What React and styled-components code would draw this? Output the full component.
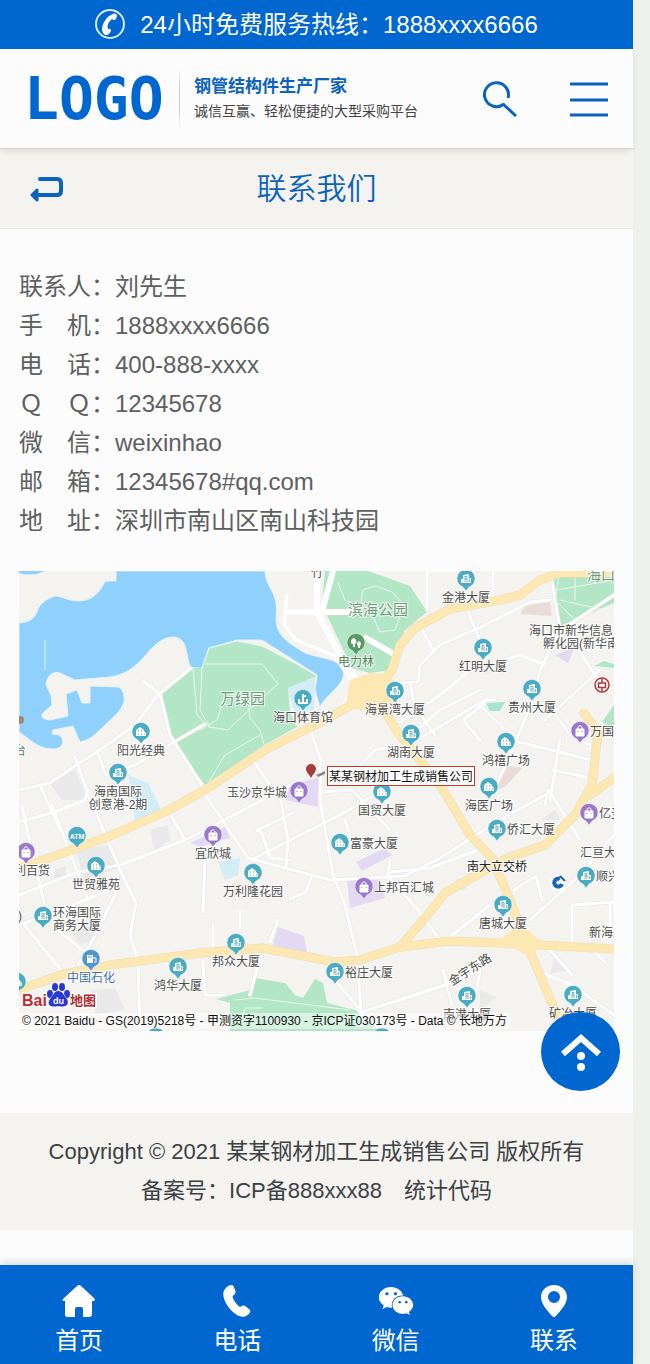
import React from "react";
import styled, { ThemeProvider, createGlobalStyle } from "styled-components";
import { FaWeixin } from "react-icons/fa";

const theme = {
  blue: "#0066d0",
  link: "#0b63bd",
  page: "#fcfcfc",
  panel: "#f4f3f0",
  gutter: "#eef0ec",
  text: "#5d6060",
  dark: "#3c4144",
};

const GlobalStyle = createGlobalStyle`
  * {
    box-sizing: border-box;
  }

  body {
    margin: 0;
    background: ${props => props.theme.gutter};
    color: ${props => props.theme.text};
    font-family: "Liberation Sans", "Noto Sans CJK SC", sans-serif;
  }

  a {
    color: inherit;
    text-decoration: none;
  }

  button {
    padding: 0;
    border: 0;
    background: none;
    cursor: pointer;
  }

  svg {
    display: block;
  }
`;

const Page = styled.div`
  display: flex;
  flex-direction: column;
  min-height: 100vh;
  margin-right: 17px;
  background: ${props => props.theme.page};
`;

const Hotline = styled.a`
  display: flex;
  align-items: center;
  justify-content: center;
  gap: 14px;
  height: 49px;
  background: ${props => props.theme.blue};
  && {
    color: #fff;
  }
  font-size: 24px;
  line-height: 48px;
`;

const Header = styled.header`
  position: relative;
  display: flex;
  align-items: center;
  height: 100px;
  padding: 0 25px 0 24px;
  border-bottom: 1px solid #d2d3d3;
  box-shadow: 0 3px 7px -2px rgba(0, 0, 0, 0.14);
`;

const Logo = styled.a`
  width: 141px;
  && {
    color: ${props => props.theme.blue};
  }
  font: bold 58px/60px "DejaVu Sans Mono", monospace;
`;

const Divider = styled.span`
  width: 1px;
  height: 62px;
  margin: 0 14px;
  background: linear-gradient(transparent, #cfcfcf 30%, #cfcfcf 70%, transparent);
`;

const Slogan = styled.div`
  flex: 1;
  font-size: 14px;
  line-height: 25px;
  color: #444;
  white-space: nowrap;

  strong {
    display: block;
    font-size: 17px;
    color: ${props => props.theme.link};
  }
`;

const Tools = styled.div`
  display: flex;
  align-items: center;
  gap: 53px;
  color: ${props => props.theme.link};

  button {
    color: inherit;
  }
`;

const TitleBar = styled.div`
  display: grid;
  grid-template-columns: 1fr auto 1fr;
  align-items: center;
  height: 80px;
  padding: 0 30px;
  background: ${props => props.theme.panel};
  border-bottom: 1px solid #e9e9e8;
  color: ${props => props.theme.link};

  h1 {
    margin: 0;
    font-size: 30px;
    line-height: 40px;
    font-weight: 350;
  }
`;

const Content = styled.main`
  padding: 38px 19px 82px;
`;

const Contacts = styled.dl`
  margin: 0 0 31px;
  font-size: 24px;
  line-height: 39px;

  div {
    display: flex;
  }

  dd {
    margin: 0;
  }
`;

const Map = styled.svg`
  width: 100%;
  height: auto;
  background: #f4f3f0;
  font-family: "Liberation Sans", "Noto Sans CJK SC", sans-serif;
`;

const Roads = styled.g`
  fill: none;
  stroke: ${props => props.color};
  stroke-width: ${props => props.size};
  stroke-linejoin: round;
  stroke-linecap: round;
`;

const Label = styled.text`
  fill: ${props => props.color || "#4c4c4c"};
  font-size: ${props => props.size || 12}px;
  paint-order: stroke;
  stroke: rgba(255, 255, 255, 0.8);
  stroke-width: 2px;
`;

const MapNote = styled.text`
  fill: #111;
  font-size: 12px;
`;

const LogoText = styled.text`
  font-weight: bold;
  font-size: ${props => props.size}px;
  paint-order: stroke;
  stroke: #fff;
  stroke-width: 3px;
`;

const Footer = styled.footer`
  padding: 19px 0 20px;
  background: ${props => props.theme.panel};
  color: ${props => props.theme.dark};
  font-size: 22px;
  line-height: 39px;
  text-align: center;

  p {
    margin: 0;
  }
`;

const BottomNav = styled.nav`
  display: grid;
  grid-template-columns: repeat(4, 1fr);
  height: 99px;
  margin-top: auto;
  background: ${props => props.theme.blue};
  box-shadow: 0 -4px 7px rgba(0, 60, 50, 0.13);
`;

const NavItem = styled.a`
  display: flex;
  flex-direction: column;
  align-items: center;
  padding-top: 18px;
  && {
    color: #fff;
  }
  font-size: 24px;
  line-height: 36px;

  svg {
    height: 36px;
    margin-bottom: 4px;
  }
`;

const TopButton = styled.button`
  position: fixed;
  right: 30px;
  bottom: 273px;
  display: grid;
  place-items: center;
  width: 79px;
  height: 79px;
  border-radius: 50%;
  && {
    background: ${props => props.theme.blue};
  }
`;

const handset =
  "M2 4C5 0 9-1 10.500 1L12.500 6C13 8 12 9 9.500 11C10 15 14 20 17 22C19 20.500 21 20 23 21.500L27 25C28 27 26 30 22 31.500C17 33 9 28 4 20C0 13-1 8 2 4Z";

const contacts = [
  ["联系人：", "刘先生"],
  ["手　机：", "1888xxxx6666"],
  ["电　话：", "400-888-xxxx"],
  ["Ｑ　Ｑ：", "12345678"],
  ["微　信：", "weixinhao"],
  ["邮　箱：", "12345678#qq.com"],
  ["地　址：", "深圳市南山区南山科技园"],
];

const pinColors = {
  office: "#4aabc4",
  tower: "#4aabc4",
  atm: "#4aabc4",
  dock: "#4aabc4",
  shop: "#9b77cd",
  gas: "#4f97cf",
  park: "#589a63",
};

// side: where the label sits relative to the pin
const pins = [
  { x: 466, y: 579, label: ["金港大厦"] },
  { x: 483, y: 648, label: ["红明大厦"] },
  { x: 532, y: 689, label: ["贵州大厦"] },
  { x: 506, y: 742, label: ["鸿禧广场"], kind: "office" },
  { x: 580, y: 731, label: ["万国"], kind: "shop", side: "right" },
  { x: 395, y: 691, label: ["海景湾大厦"] },
  { x: 411, y: 734, label: ["湖南大厦"] },
  { x: 489, y: 787, label: ["海医广场"], kind: "office" },
  { x: 382, y: 792, label: ["国贸大厦"], kind: "office" },
  { x: 340, y: 843, label: ["富豪大厦"], kind: "office", side: "right" },
  { x: 497, y: 829, label: ["侨汇大厦"], side: "right" },
  { x: 589, y: 813, label: ["亿圣"], kind: "shop", side: "right" },
  { x: 586, y: 876, label: ["顺兴"], side: "right" },
  { x: 503, y: 905, label: ["唐城大厦"] },
  { x: 467, y: 996, label: ["南港大厦"] },
  { x: 573, y: 995, label: ["矿冶大厦"] },
  { x: 253, y: 873, label: ["万利隆花园"], kind: "office" },
  { x: 364, y: 887, label: ["上邦百汇城"], kind: "shop", side: "right" },
  { x: 236, y: 943, label: ["邦众大厦"] },
  { x: 335, y: 972, label: ["裕庄大厦"], side: "right" },
  { x: 178, y: 967, label: ["鸿华大厦"] },
  { x: 91, y: 959, label: ["中国石化"], kind: "gas", color: "#3f74b5" },
  { x: 43, y: 916, label: ["环海国际", "商务大厦"], side: "right" },
  { x: 96, y: 866, label: ["世贸雅苑"], kind: "office" },
  { x: 77, y: 836, label: [], kind: "atm" },
  { x: 26, y: 852, label: [], kind: "shop" },
  { x: 213, y: 835, label: ["宜欣城"], kind: "shop" },
  { x: 299, y: 791, label: ["玉沙京华城"], kind: "shop", side: "left" },
  { x: 141, y: 732, label: ["阳光经典"], kind: "office" },
  { x: 118, y: 773, label: ["海南国际", "创意港-2期"] },
  { x: 303, y: 699, label: ["海口体育馆"], kind: "dock" },
  { x: 356, y: 643, label: ["电力林"], kind: "park", color: "#4c8457" },
  { x: 17, y: 982, label: [], kind: "office" },
  { x: 156, y: 1037, label: [], kind: "office" },
  { x: 382, y: 1037, label: [], kind: "office" },
];

const Glyph = ({ kind = "tower" }) => {
  switch (kind) {
    case "office":
      return (
        <g>
          <path d="M-5 4V-2L-1-5L3-2V-1L5 1V4Z" fill="#fff" />
          <path d="M-3-1h1M0-1h1M-3 2h1M0 2h1M3 2h1" stroke="#4aabc4" />
        </g>
      );
    case "shop":
      return (
        <g>
          <path d="M-4-2H4V5H-4Z" fill="#fff" stroke="#fff" strokeLinejoin="round" />
          <path d="M-2-1V-4Q0-7 2-4V-1" fill="none" stroke="#fff" />
          <path d="M-2 0V1M2 0V1" stroke="#9b77cd" />
        </g>
      );
    case "gas":
      return (
        <g>
          <path d="M-4-4H2V4H-4Z" fill="#fff" />
          <path d="M2-1H5V3H3M-2-2H0" fill="none" stroke="#fff" />
          <path d="M-3-2H1" stroke="#4f97cf" />
        </g>
      );
    case "dock":
      return <path d="M0-5V3M-4 0V4H4V0M0-3H3" fill="none" stroke="#fff" strokeWidth="2" />;
    case "park":
      return (
        <path
          d="M-2-5C-5-4-6-1-4 1H-3V4H-1V1C2 0 0-4-2-5ZM3-2C0 0 1 2 2 3V5H4V3C6 1 5-1 3-2Z"
          fill="#fff"
        />
      );
    case "atm":
      return (
        <text y="3" fill="#fff" fontSize="7" fontWeight="bold" textAnchor="middle">
          ATM
        </text>
      );
    default:
      return (
        <g>
          <path d="M-5 4V0H-3V-4L3-5V-1H5V4Z" fill="#fff" />
          <path d="M-1-3V3M-1-2.500H1V3M-1 0H1M3.500 0V3" stroke="#4aabc4" strokeWidth="0.800" fill="none" />
        </g>
      );
  }
};

const labelPlace = {
  bottom: { x: 0, y: 23, anchor: "middle" },
  right: { x: 10, y: 5, anchor: "start" },
  left: { x: -12, y: 6, anchor: "end" },
};

const Pin = ({ x, y, label, kind = "tower", side = "bottom", color }) => {
  const place = labelPlace[side];
  const lift = side === "right" && label.length > 1 ? 4 : 0;

  return (
    <g transform={`translate(${x} ${y})`}>
      <path
        d="M-3 8L0 12L3 8A9 9 0 1 0-3 8Z"
        fill={pinColors[kind]}
        stroke="#fff"
        strokeOpacity="0.5"
      />
      <Glyph kind={kind} />
      {label.map((line, i) => (
        <Label
          key={line}
          x={place.x}
          y={place.y - lift + i * 13}
          textAnchor={place.anchor}
          color={color}
        >
          {line}
        </Label>
      ))}
    </g>
  );
};

const streets = [
  "M19 790L50 783L78 764L97 752L135 725L158 695L191 668",
  "M143 681L160 694L170 735L205 790",
  "M75 757L90 800",
  "M97 752L106 775L135 765L205 724",
  "M19 822L55 812L85 800L88 790",
  "M22 806L36 870L45 905",
  "M52 805L88 900",
  "M40 785L60 830",
  "M95 810L120 870L136 903L130 935L138 960L140 1031",
  "M19 895L75 873L120 865L185 840L215 825L300 780L320 768",
  "M19 925L60 910L110 890L118 880",
  "M118 875L115 895L90 945L78 965",
  "M22 922L65 975",
  "M55 928L85 952",
  "M168 810L185 840",
  "M202 790L248 858L330 880L405 876L440 858L500 820L545 795",
  "M255 858L340 815L400 780",
  "M257 830L262 833L270 858L288 860M257 830L293 813",
  "M280 795L288 840L286 868",
  "M311 878L306 892L290 899",
  "M311 732L321 760L320 800L333 875L345 905L357 955L362 1025",
  "M253 760L270 785",
  "M345 820L355 850",
  "M390 860L388 876L418 910L440 940",
  "M320 792L352 790L390 830",
  "M360 765L375 750L400 745L440 710L480 690",
  "M400 722L440 695L470 670L520 655L545 665",
  "M400 683L418 682L420 665L440 645L485 625L530 602L550 600",
  "M427 571L427 610M465 605L480 640M420 625L433 650",
  "M493 571V600M427 571H465",
  "M552 580L560 630L540 670L533 700L510 755L490 800",
  "M569 625L614 595M572 640L595 675L614 690",
  "M410 682L414 705L435 735",
  "M400 750L485 700L495 700M480 705L505 730",
  "M463 720L480 740M463 720L485 703",
  "M510 740L560 752L590 760M553 770L586 777",
  "M545 720L600 670M545 700L570 735L590 745M560 740L550 800",
  "M390 872L430 868L478 850M545 805L548 790L555 800L580 840",
  "M450 937L490 905",
  "M514 890L536 876L542 900M530 920L580 875L614 835",
  "M572 945V905L614 902M610 905V945M535 970L572 985L614 1015",
  "M400 1000L445 985L480 970M443 970L452 1005M480 970L475 1000",
  "M550 950L572 975M595 952L605 962",
  "M335 980L362 1012L445 985",
  "M205 860L203 912M203 960L205 995H225",
  "M240 910V930M278 920L270 942M258 965L250 995",
  "M213 925V950M530 940L560 950H614",
];

const parkPaths = [
  "M202 668L209 648L237 641L262 646L300 666L317 676L314 690",
  "M202 668L200 710L210 727L228 730L247 712L260 700L278 684L262 664L205 664",
  "M200 730L217 720L226 692L248 700L250 718L260 730L264 744M260 735L225 755L207 785",
  "M193 668L197 715L210 728",
  "M338 583L345 600L360 608L363 590L375 586L392 592L404 605L395 630L380 632L370 610",
  "M560 571L555 600L575 620M557 590L614 580M560 600L614 612M575 571V600",
  "M235 1000L255 998L350 1010M240 1025L245 1008H262",
];

const mainRoads = [
  "M19 868L60 854L110 836L165 812L205 790L265 750L315 725L355 703L380 690",
  "M375 690L392 670L400 645L415 628L450 609L495 601L520 595L540 580L560 573H614",
  "M375 695L398 733L440 785L470 835L492 858L510 900L525 940L560 1022",
  "M19 990L60 975L110 965L200 953L262 948L335 962L360 960L400 947L450 941L520 944L614 949",
  "M400 947L425 918L445 893L480 873L510 857L545 845L575 815L592 785L598 733L584 713",
  "M590 795L614 778",
];

const LocationMap = () => (
  <Map viewBox="19 571 595 460" role="img" aria-label="地图">
    <path
      d="M116 571V581H105C100 592 93 601 78 601C68 601 62 596 55 596C44 600 42 603 39 607C35 619 30 622 19 623V732C31 740 38 749 53 749C64 749 65 739 59 735L52 734L53 730L73 726L80 742C93 739 96 733 105 725C114 716 120 713 124 702C125 693 121 687 118 687L90 686V703L82 703L77 690L66 694L68 716L50 720C43 720 40 716 43 713L52 705L51 695L46 685C47 675 53 671 60 673L75 680L110 677C130 674 140 662 150 650C161 639 166 637 175 637C189 640 185 656 191 668H202L209 648L237 640H262L300 664L317 675L315 690L320 707C326 694 345 686 344 670C335 655 315 660 300 650C284 640 276 633 276 618C279 590 266 590 265 571Z"
      fill="#8fd0fd"
      stroke="#e2f3fa"
    />
    <path d="M19 571H45Q32 577 19 573Z" fill="#8fd0fd" />
    <path d="M45 640V670" stroke="#e2f3fa" />
    <g fill="#b3e6c7">
      <path d="M191 668H202L209 648L237 641L262 646L300 666L317 676L288 688L290 712L297 727L264 745L205 785L173 742L168 718L162 694Z" />
      <path d="M325 571H368L410 586L427 612L405 630L398 645L390 670L370 673L352 668L322 605Z" />
      <path d="M552 571H614V603L560 626Z" />
      <path d="M216 999L250 990L255 978L285 983L295 995L303 998L315 979L323 983L327 1003L355 1010L380 1031H230V1003Z" />
      <path d="M602 722L614 705V728ZM594 666L604 661L614 664V668Z" />
      <path d="M486 703L505 702L500 711L490 711Z" fill="#a6e3d0" />
    </g>
    <g fill="#e4d9f3">
      <path d="M278 927L304 936L308 957L272 948Z" />
      <path d="M347 880L380 880L385 898L350 908Z" />
      <path d="M356 862L385 848L392 855L362 871ZM190 843L225 827L230 838L200 847Z" />
      <path d="M290 785L318 778V807L285 800ZM555 655L575 647L568 663Z" />
    </g>
    <g fill="#e9dcd8">
      <path d="M525 606L550 602L552 616L520 614Z" />
      <path d="M505 765L522 768L505 787L490 792Z" />
    </g>
    <g fill="#d3ecf5">
      <path d="M288 688L315 677L314 710L295 715Z" />
      <path d="M128 775L148 783L162 812L135 822Z" />
      <path d="M218 862L240 858L238 875L225 880Z" />
    </g>
    <g fill="#e9e9ea">
      <path d="M50 783L75 770L88 800L62 800ZM76 850L110 845L118 868L84 880Z" />
      <path d="M150 830L168 825L170 840L155 851ZM70 930L92 925L97 940L80 945Z" />
      <path d="M555 955L568 970L550 974ZM480 990L497 997L480 1010ZM455 879H466V890H455ZM540 820L555 810L560 820Z" />
      <path d="M90 990L115 988L125 1010L95 1015ZM55 870L66 865V880L53 882Z" />
    </g>
    <Roads color="#e4e4e4" size="4">
      {streets.map(d => (
        <path key={d} d={d} />
      ))}
    </Roads>
    <Roads color="#fff" size="3">
      {streets.map(d => (
        <path key={d} d={d} />
      ))}
    </Roads>
    <Roads color="#fff" size="6">
      <path d="M317 571V612L345 665L357 680L345 705M333 571L322 612M286 612H350M366 638L392 653" />
    </Roads>
    <Roads color="#fff" size="3">
      <path d="M287 596L284 625L296 640L335 656L350 680" />
    </Roads>
    <Roads color="#e8f6ec" size="1">
      {parkPaths.map(d => (
        <path key={d} d={d} />
      ))}
    </Roads>
    <Roads color="#ecdcae" size="9">
      {mainRoads.map(d => (
        <path key={d} d={d} />
      ))}
    </Roads>
    <Roads color="#fde8b4" size="8">
      {mainRoads.map(d => (
        <path key={d} d={d} />
      ))}
    </Roads>
    <path d="M350 680L370 673L392 674L396 700L378 712L345 708Z" fill="#fde8b4" />
    <path d="M500 940L518 925L530 932L545 945L528 956Z" fill="#fde8b4" />

    <Label x="348" y="615" size="15" color="#6f9a7f">滨海公园</Label>
    <Label x="220" y="704" size="15" color="#6f9a7f">万绿园</Label>
    <Label x="587" y="580" size="14" color="#6f9a7f">海口</Label>
    <Label x="311" y="577">竹</Label>
    <Label x="529" y="635">海口市新华信息</Label>
    <Label x="543" y="648">孵化园(新华南</Label>
    <Label x="467" y="871" color="#222">南大立交桥</Label>
    <Label x="580" y="857">汇亘大</Label>
    <Label x="589" y="937">新海航</Label>
    <Label x="14" y="875">利百货</Label>
    <Label x="14" y="755" color="#4c8457">台</Label>
    <Label x="18" y="920">)</Label>
    <Label x="452" y="986" transform="rotate(-33 452 986)">金宇东路</Label>

    {pins.map(pin => (
      <Pin key={`${pin.x}-${pin.y}`} {...pin} />
    ))}

    <circle cx="20" cy="720" r="4" fill="#a08a72" />
    <g fill="none" stroke="#b0373c" strokeWidth="1.500">
      <circle cx="602" cy="685" r="7" fill="#fff" />
      <path d="M598.500 683H605.500V687.500H598.500ZM602 679V683M602 687V691" />
    </g>
    <circle cx="558" cy="883" r="8" fill="#fff" />
    <path d="M560 879A4 4 0 1 0 562 884" fill="none" stroke="#1766b8" strokeWidth="4" />
    <path d="M560 876L565 881" stroke="#1766b8" strokeWidth="2" />

    <path d="M316 775L325 771V774L318 777Z" fill="#8a8a86" />
    <path d="M311 778C309 774 306 772 306 769A5 5 0 0 1 316 769C316 772 313 774 311 778Z" fill="#a83c3a" />
    <rect x="327.500" y="766.500" width="147" height="19" fill="#fff" stroke="#c0392b" />
    <MapNote x="329" y="781">某某钢材加工生成销售公司</MapNote>

    <g>
      <LogoText x="22" y="1006" size="16" fill="#c02c2e">Bai</LogoText>
      <LogoText x="70" y="1005" size="13" fill="#b02c30">地图</LogoText>
      <g fill="#2a36d6" stroke="#fff" paintOrder="stroke">
        <ellipse cx="50" cy="994" rx="3" ry="4" />
        <ellipse cx="55" cy="987" rx="3" ry="4" />
        <ellipse cx="62" cy="987" rx="3" ry="4" />
        <ellipse cx="67" cy="994" rx="3" ry="4" />
        <path d="M58 991C63 991 64 996 67 999C70 1005 65 1008 58 1006C51 1008 46 1005 50 999C53 996 54 991 58 991Z" />
      </g>
      <text x="53" y="1004" fontSize="9" fontWeight="bold" fill="#fff">du</text>
    </g>
    <rect x="19" y="1013" width="492" height="16" fill="#fff" fillOpacity="0.5" />
    <MapNote x="22" y="1025">
      © 2021 Baidu - GS(2019)5218号 - 甲测资字1100930 - 京ICP证030173号 - Data © 长地万方
    </MapNote>
  </Map>
);

const navItems = [
  {
    label: "首页",
    icon: (
      <svg width="34" height="36" viewBox="0 0 34 36" fill="#fff">
        <path d="M15 3Q17 1 19 3L32 15Q34 18 31 18H30V31Q30 34 27 34H21V26Q21 24 19 24H15Q13 24 13 26V34H5Q3 34 3 31V18H2Q-1 18 2 15Z" />
      </svg>
    ),
  },
  {
    label: "电话",
    icon: (
      <svg width="28" height="36" viewBox="0 -2 28 36" fill="#fff">
        <path d={handset} />
      </svg>
    ),
  },
  { label: "微信", icon: <FaWeixin size={36} /> },
  {
    label: "联系",
    icon: (
      <svg width="26" height="36" viewBox="0 0 26 36" fill="#fff">
        <path
          fillRule="evenodd"
          d="M13 2C5 2 0 8 0 14C0 21 6 27 11 33Q13 35 15 33C20 27 26 21 26 14C26 8 21 2 13 2ZM13 8A6 6 0 1 1 13 20A6 6 0 1 1 13 8Z"
        />
      </svg>
    ),
  },
];

const App = () => (
  <ThemeProvider theme={theme}>
    <>
      <GlobalStyle />
      <Page>
        <Hotline href="#tel">
          <svg width="31" height="31" viewBox="0 0 31 31" fill="none">
            <circle cx="15" cy="15" r="14" stroke="#d8ecff" strokeWidth="2" />
            <path
              d="M18 5C20 4 22 5 22 7L21 10Q19 12 17 10C13 13 12 17 13 20Q16 19 16 22L14 25C11 27 8 26 7 21C7 14 12 7 18 5Z"
              fill="#fff"
            />
          </svg>
          <span>24小时免费服务热线：1888xxxx6666</span>
        </Hotline>

        <Header>
          <Logo href="#home">LOGO</Logo>
          <Divider />
          <Slogan>
            <strong>钢管结构件生产厂家</strong>
            诚信互赢、轻松便捷的大型采购平台
          </Slogan>
          <Tools>
            <button type="button" aria-label="搜索">
              <svg width="35" height="36" viewBox="0 0 35 36" fill="none" stroke="currentColor" strokeWidth="3">
                <path d="M22 23A12 12 0 1 1 26 17M21 23L34 35" />
              </svg>
            </button>
            <button type="button" aria-label="菜单">
              <svg width="38" height="36" viewBox="0 0 38 36" stroke="currentColor" strokeWidth="3">
                <path d="M0 3H38M0 19H38M0 34H38" />
              </svg>
            </button>
          </Tools>
        </Header>

        <TitleBar>
          <a href="#back" aria-label="返回">
            <svg width="34" height="26" viewBox="0 0 34 26" fill="none" stroke="currentColor">
              <path d="M10 3H27Q31 3 31 7V15Q31 19 27 19H7" strokeWidth="4" strokeLinecap="round" />
              <path d="M2 19L7 14V24Z" fill="currentColor" strokeWidth="3" strokeLinejoin="round" />
            </svg>
          </a>
          <h1>联系我们</h1>
        </TitleBar>

        <Content>
          <Contacts>
            {contacts.map(([name, value]) => (
              <div key={name}>
                <dt>{name}</dt>
                <dd>{value}</dd>
              </div>
            ))}
          </Contacts>
          <LocationMap />
        </Content>

        <Footer>
          <p>Copyright © 2021 某某钢材加工生成销售公司 版权所有</p>
          <p>备案号：ICP备888xxx88　统计代码</p>
        </Footer>

        <BottomNav>
          {navItems.map(({ label, icon }) => (
            <NavItem key={label} href={`#${label}`}>
              {icon}
              {label}
            </NavItem>
          ))}
        </BottomNav>
      </Page>

      <TopButton type="button" aria-label="返回顶部">
        <svg width="42" height="38" viewBox="0 0 42 38" fill="none">
          <path d="M3 21L21 5L39 21" stroke="#fff" strokeWidth="6" />
          <circle cx="21" cy="23" r="4" fill="#fff" />
          <circle cx="21" cy="34" r="4" fill="#fff" />
        </svg>
      </TopButton>
    </>
  </ThemeProvider>
);

export default App;
